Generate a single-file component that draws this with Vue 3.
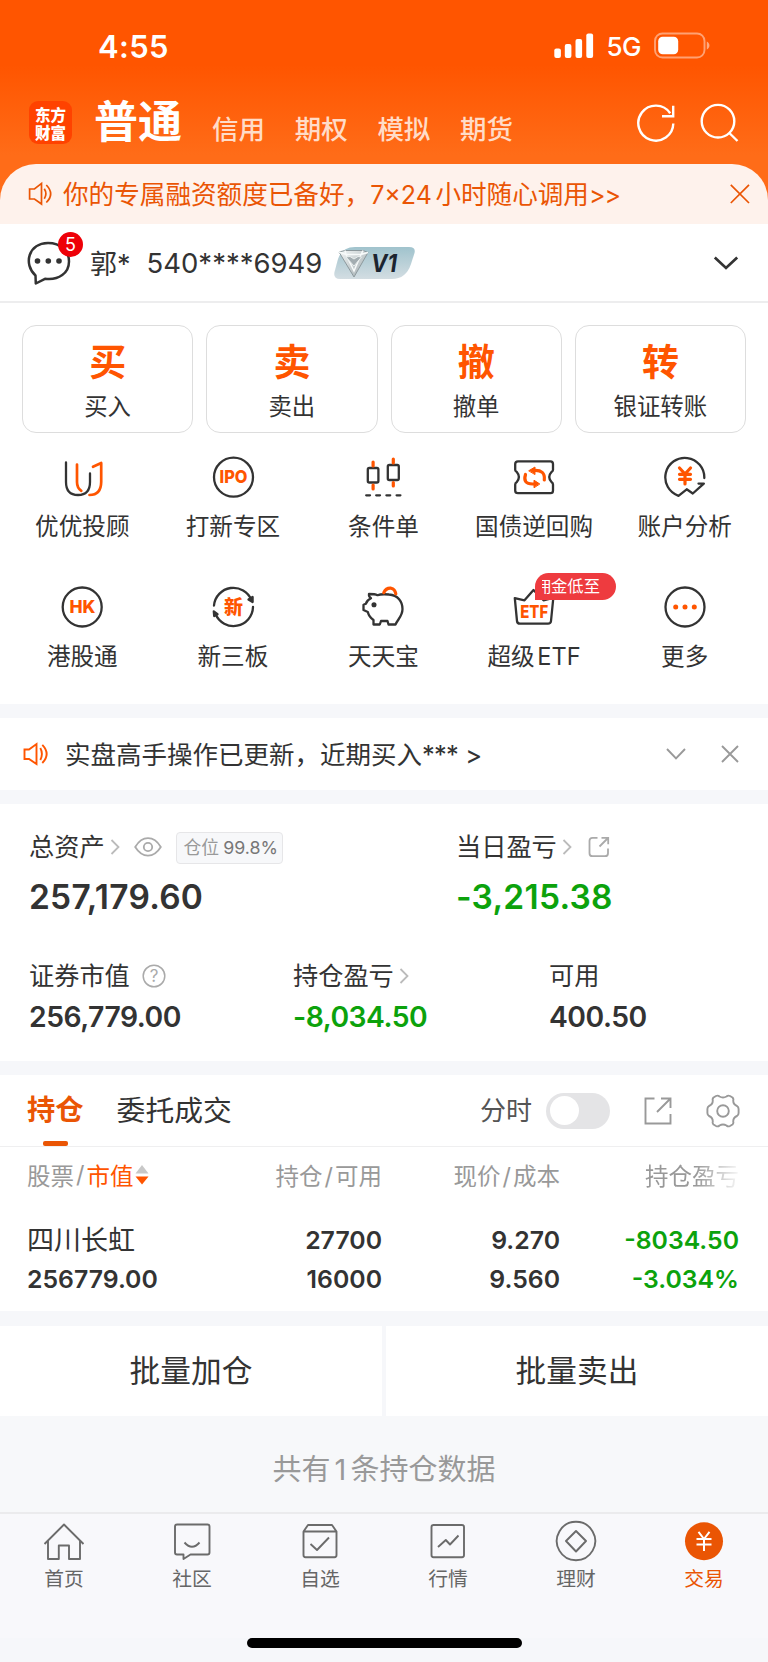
<template>
  <div class="page">
    <header class="header">
      <div class="status">
        <span class="time">4:55</span>
        <div class="status-right">
          <svg class="signal" width="40" height="26" viewBox="0 0 40 26" fill="#fff">
            <rect x="0.3" y="15.5" width="6.6" height="9.5" rx="2" />
            <rect x="10.8" y="11" width="6.6" height="14" rx="2" />
            <rect x="21.5" y="6" width="6.6" height="19" rx="2" />
            <rect x="32.3" y="0.5" width="6.8" height="24.5" rx="2" />
          </svg>
          <span class="net">5G</span>
          <svg class="battery" width="57" height="28" viewBox="0 0 57 28">
            <rect x="1" y="1.5" width="49.5" height="24" rx="7.5" fill="none" stroke="#fff" stroke-opacity=".45" stroke-width="1.9" />
            <rect x="4.2" y="4.7" width="20" height="17.6" rx="4.5" fill="#fff" />
            <path d="M52.8 9.5c3.5 1.5 3.5 6.5 0 8z" fill="#fff" fill-opacity=".5" />
          </svg>
        </div>
      </div>
      <div class="top-nav">
        <div class="logo"><span>东方</span><span>财富</span></div>
        <b class="main-tab">普通</b>
        <span class="sub-tab" v-for="tab in topTabs" :key="tab">{{ tab }}</span>
        <svg class="refresh" width="40" height="40" viewBox="0 0 40 40" fill="none" stroke="#fff" stroke-width="2.4">
          <path d="M37.3 20.5A17.5 17.5 0 1 1 34.2 10.2" />
          <path d="M37.2 2.8V13.2H26" />
        </svg>
        <svg class="search" width="40" height="40" viewBox="0 0 40 40" fill="none" stroke="#fff" stroke-width="2.4">
          <circle cx="18" cy="18.2" r="16.3" />
          <path d="M29.3 30L37.5 38" />
        </svg>
      </div>
    </header>

    <div class="banner">
      <svg width="26" height="26" viewBox="0 0 26 26" fill="none" stroke="#ea5504" stroke-width="1.7">
        <path d="M1.6 8H6.5L13.5 2.4V23L6.5 18H1.6Z" />
        <path d="M16.3 7.8Q19.5 12.8 16.3 17.8M18.3 4Q27 13 18.3 21.5" />
      </svg>
      <span class="banner-text">你的专属融资额度已备好，<i>7×24 </i>小时随心调用<em>&gt;&gt;</em></span>
      <svg class="banner-close" width="22" height="22" viewBox="0 0 22 22" fill="none" stroke="#ea5504" stroke-width="1.7">
        <path d="M1.8 1.8L20 20M20 1.8L1.8 20" />
      </svg>
    </div>

    <div class="user">
      <div class="chat">
        <svg width="46" height="46" viewBox="0 0 46 46">
          <path d="M9.5 35.5C-3 24 2.5 3.2 22 3C35 3 43 11.5 43 21.5C43 33 33 40.5 19 38.8L9.8 43.5Z" fill="none" stroke="#333" stroke-width="2.5" stroke-linejoin="round" />
          <g fill="#333">
            <circle cx="11.5" cy="21" r="2.8" />
            <circle cx="22.3" cy="21" r="2.8" />
            <circle cx="33" cy="21" r="2.8" />
          </g>
        </svg>
        <span class="count">5</span>
      </div>
      <span class="user-name">郭*</span>
      <span class="user-no">540****6949</span>
      <div class="level">
        <svg width="82" height="34" viewBox="0 0 82 34">
          <defs>
            <linearGradient id="lv" x1="0" y1="0" x2="0" y2="1">
              <stop offset="0" stop-color="#a0c3cd" />
              <stop offset="1" stop-color="#d3dde2" />
            </linearGradient>
            <linearGradient id="gem" x1="0" y1="0" x2="1" y2="1">
              <stop offset="0" stop-color="#f4f7f7" />
              <stop offset="1" stop-color="#9da8ac" />
            </linearGradient>
          </defs>
          <path d="M21 1H75Q82 1 80.5 7L77 18Q72 33 58 33H6Q-1 33 .5 26L4 13Q8 1 21 1Z" fill="url(#lv)" />
          <path d="M5 6L11 4.5H29L34 6.5L20 31Z" fill="url(#gem)" stroke="#8d999d" stroke-width="1" />
          <path d="M5 6L12 8.5H27L34 6.5M12 8.5L20 25L27 8.5M12 8.5L11 4.5M27 8.5L29 4.5" fill="none" stroke="#f7fafa" stroke-width="1.5" />
          <path d="M12 11L16 10.5L20 13L24 10.5L27.5 11L20 20Z" fill="#a3adb1" stroke="#e9eeee" stroke-width="1" />
          <text x="37" y="25.5" textLength="26" lengthAdjust="spacingAndGlyphs" class="level-text">V1</text>
        </svg>
      </div>
      <svg class="user-arrow" width="28" height="18" viewBox="0 0 28 18" fill="none" stroke="#333" stroke-width="2.7">
        <path d="M2.8 3.5L14 14L25.2 3.5" />
      </svg>
    </div>

    <section class="trade">
      <div class="cards">
        <div class="card" v-for="item in actions" :key="item.name">
          <b>{{ item.short }}</b>
          <span>{{ item.name }}</span>
        </div>
      </div>
      <div class="tools">
        <div class="tool" v-for="tool in tools" :key="tool.icon">
          <svg class="tool-icon" width="44" height="44" viewBox="0 0 44 44">
            <template v-if="tool.icon === 'uu'">
              <path d="M6 7.5V27C6 35 10 40 18 40S30 35 30 27V18.5" />
              <path class="o thin" d="M17 9.5V27Q17 33 21.3 35.8M33 11.8L41.2 8V27Q41 40 29.5 40" />
            </template>
            <template v-if="tool.icon === 'ipo'">
              <circle cx="22.5" cy="22.2" r="19.5" />
              <text x="22.5" y="28.4" textLength="28" lengthAdjust="spacingAndGlyphs">IPO</text>
            </template>
            <template v-if="tool.icon === 'cond'">
              <rect x="6.8" y="13" width="10.6" height="14.5" rx="1.5" />
              <rect x="26.8" y="10" width="11" height="15" rx="1.5" />
              <path class="o" d="M12.1 7V11M12.1 30V34M32.3 4V8M32.3 27.5V31" />
              <path d="M5.2 40.3H9M15.2 40.3H19M25.4 40.3H29.2M35.6 40.3H39.4" />
            </template>
            <template v-if="tool.icon === 'bond'">
              <path d="M6 6.3H38.5Q41 6.3 41 9V15Q41 16 39.5 17Q35 22 39.5 27Q41 28 41 29.500V35.500Q41 38.200 38.500 38.200H6Q3.200 38.200 3.200 35.500V29.500Q3.200 28 4.800 27Q9 22 4.800 17Q3.200 16 3.200 15V9Q3.200 6.300 6 6.300Z" />
              <path class="o" d="M13.5 19.5Q10.5 29 20.5 29H23M21.5 15.5Q33.5 14.5 32.3 25" />
              <path class="o solid" d="M17 15.6L23 12V19.2ZM27.5 28.8L22 25.2V32.4Z" />
            </template>
            <template v-if="tool.icon === 'account'">
              <path d="M41.3 23A19.5 19.5 0 1 0 15.5 40.8L23.7 34.3L29.8 38.5L40.8 28.6H35.5" />
              <path class="o yen" d="M16.5 13L22 19L27.5 13M22 19V29M16.5 19.3H27.5M16.5 24.3H27.5" />
            </template>
            <template v-if="tool.icon === 'hk'">
              <circle cx="22.2" cy="22" r="19.5" />
              <text x="22.5" y="28.2" textLength="26" lengthAdjust="spacingAndGlyphs">HK</text>
            </template>
            <template v-if="tool.icon === 'new'">
              <path d="M3 20.5A19.5 19.5 0 0 1 40.5 15M42 22A19.5 19.5 0 0 1 4.5 29" />
              <path class="dark" d="M37.5 14.5L41.6 12V17ZM2.8 26.5L6.5 29.2L3.2 31Z" />
              <text x="22.5" y="28.8" class="cn">新</text>
            </template>
            <template v-if="tool.icon === 'pig'">
              <path d="M8 9Q14 9 16.5 10.2Q20 8.8 28 9.5C37 10 41.5 17 41.5 24C41.5 31 37 34 34.5 39.5H27.5L26.500 36H20L18.800 39.500H12.500V35Q8 32 6.800 27L2.500 25V19.800L4.800 18.800Q6 15 10 13.200Q7.500 11.500 8 9Z" />
              <circle class="dark" cx="13" cy="19.8" r="1.4" />
              <path class="o" d="M22.8 7.7Q25 2.8 30 3.2Q34 4 34.8 8.8" />
            </template>
            <template v-if="tool.icon === 'etf'">
              <path d="M2.8 13.2L12.5 15.3L21.5 5L31.5 15.3L41.3 13L39 36Q38.7 38.7 36 38.7H8Q5.3 38.7 5 36Z" />
              <text x="22.2" y="32.8" textLength="28" lengthAdjust="spacingAndGlyphs">ETF</text>
            </template>
            <template v-if="tool.icon === 'more'">
              <circle cx="22" cy="22" r="19.5" />
              <path class="dots" d="M12.7 22H12.71M22 22H22.01M31.3 22H31.31" />
            </template>
          </svg>
          <span class="tool-name">{{ tool.name }}</span>
          <span class="promo" v-if="tool.promo"><span class="promo-clip"><i>{{ tool.promo }}</i></span></span>
        </div>
      </div>
    </section>

    <section class="notice">
      <svg width="27" height="24" viewBox="0 0 27 24" fill="none" stroke="#ff5500" stroke-width="1.9">
        <path d="M1.5 7.5H6L13.5 2V22L6 17H1.5Z" />
        <path d="M17.3 6Q20.5 12 17.3 18M19.3 2.8Q28 12 19.3 21" />
      </svg>
      <span class="notice-text">实盘高手操作已更新，近期买入<i>***</i> <em>&gt;</em></span>
      <svg class="fold" width="22" height="14" viewBox="0 0 22 14" fill="none" stroke="#999" stroke-width="1.9">
        <path d="M2 2L11 11.3L20 2" />
      </svg>
      <svg class="close" width="20" height="20" viewBox="0 0 20 20" fill="none" stroke="#999" stroke-width="1.9">
        <path d="M2 2L18 18M18 2L2 18" />
      </svg>
    </section>

    <section class="asset">
      <div class="asset-row">
        <div class="asset-main">
          <div class="label">
            <span>总资产</span>
            <svg class="more-arrow" width="10" height="16" viewBox="0 0 10 16"><path d="M1.5 1L8.5 8L1.5 15" /></svg>
            <svg class="eye" width="28" height="20" viewBox="0 0 28 20" fill="none" stroke="#aaa" stroke-width="1.8">
              <path d="M1.2 10Q6.5 1.2 14 1.2T26.8 10Q21.5 18.6 14 18.6T1.2 10Z" />
              <circle cx="14" cy="10" r="4.2" />
            </svg>
            <span class="tag">仓位 <i>99.8%</i></span>
          </div>
          <strong>257,179.60</strong>
        </div>
        <div class="asset-main">
          <div class="label">
            <span>当日盈亏</span>
            <svg class="more-arrow" width="10" height="16" viewBox="0 0 10 16"><path d="M1.5 1L8.5 8L1.5 15" /></svg>
            <svg class="share" width="22" height="22" viewBox="0 0 22 22" fill="none" stroke="#aaa" stroke-width="1.8">
              <path d="M9.5 1.8H4.5Q1.5 1.8 1.5 4.8V17.2Q1.5 20.2 4.5 20.2H17Q20 20.2 20 17.2V12.5M13.5 1.8H20.2V8.3M20 2L11.5 10.5" />
            </svg>
          </div>
          <strong class="green">-3,215.38</strong>
        </div>
      </div>
      <div class="asset-row second">
        <div class="asset-item">
          <div class="label">
            <span>证券市值</span>
            <svg class="ask" width="24" height="24" viewBox="0 0 24 24">
              <circle cx="12" cy="12" r="10.8" />
              <text x="12" y="18">?</text>
            </svg>
          </div>
          <strong>256,779.00</strong>
        </div>
        <div class="asset-item">
          <div class="label">
            <span>持仓盈亏</span>
            <svg class="more-arrow" width="10" height="16" viewBox="0 0 10 16"><path d="M1.5 1L8.5 8L1.5 15" /></svg>
          </div>
          <strong class="green">-8,034.50</strong>
        </div>
        <div class="asset-item">
          <div class="label"><span>可用</span></div>
          <strong>400.50</strong>
        </div>
      </div>
    </section>

    <section class="hold">
      <div class="hold-tabs">
        <b class="active">持仓</b>
        <span class="order">委托成交</span>
        <span class="minute">分时</span>
        <span class="switch"></span>
        <svg class="hold-share" width="28" height="28" viewBox="0 0 28 28" fill="none" stroke="#999" stroke-width="1.9">
          <path d="M10.5 1.5H1.5V26.5H26.5V17M17 1.5H26.5V11M26 2L13 15" />
        </svg>
        <svg class="gear" width="34" height="34" viewBox="0 0 34 34" fill="none" stroke="#999" stroke-width="1.9" stroke-linejoin="round">
          <path d="M10 2Q12 1 13.500 2.500Q17 4.500 20.500 2.500Q22 1 24 2L26.500 3.500Q27.800 4.800 27.200 6.500Q27.200 10.500 31 12Q32.600 13 32.600 15V19Q32.600 21 31 22Q27.200 23.500 27.200 27.500Q27.800 29.200 26.500 30.500L24 32Q22 33 20.500 31.500Q17 29.500 13.500 31.500Q12 33 10 32L7.500 30.500Q6.200 29.200 6.800 27.500Q6.800 23.500 3 22Q1.400 21 1.400 19V15Q1.400 13 3 12Q6.800 10.500 6.800 6.500Q6.200 4.800 7.500 3.500Z" />
          <circle cx="17" cy="17" r="5.8" />
        </svg>
      </div>
      <div class="grid head">
        <span>股票<em>/</em><i>市值</i><svg width="14" height="20" viewBox="0 0 14 20"><path d="M7 0L13.5 8.5H.5Z" fill="#c8c8c8" /><path d="M7 19.5L13.5 11.5H.5Z" fill="#ff5500" /></svg></span>
        <span>持仓<em>/</em>可用</span>
        <span>现价<em>/</em>成本</span>
        <span class="fade">持仓盈亏</span>
      </div>
      <div class="grid row" v-for="stock in stocks" :key="stock.name">
        <div><span class="stock-name">{{ stock.name }}</span><span>{{ stock.value }}</span></div>
        <div><span>{{ stock.amount }}</span><span>{{ stock.usable }}</span></div>
        <div><span>{{ stock.price }}</span><span>{{ stock.cost }}</span></div>
        <div class="green"><span>{{ stock.profit }}</span><span>{{ stock.rate }}</span></div>
      </div>
    </section>

    <div class="batch">
      <button>批量加仓</button>
      <button>批量卖出</button>
    </div>

    <p class="total">共有<i>1</i>条持仓数据</p>

    <footer class="tabbar">
      <div class="tab" v-for="(tab, index) in tabs" :key="tab" :class="{ active: index === current }" @click="current = index">
        <svg width="44" height="44" viewBox="0 0 44 44">
          <path v-if="index === 0" d="M2.5 25L22 5.5L41.5 25M6 22V40H16.8V26.5H27V40H38V22" />
          <path v-if="index === 1" d="M7 5.5H37.5Q39.5 5.5 39.5 7.5V33.5Q39.5 35.5 37.5 35.5H20.5L13.5 40V35.5H7Q5 35.5 5 33.5V7.5Q5 5.5 7 5.5ZM14.5 23.5Q22 32 29.5 23.5" />
          <path v-if="index === 2" d="M5.5 12.5V36Q5.5 38.2 7.5 38.2H36.5Q38.5 38.2 38.5 36V12.5L34 6H10L5.5 12.5H38.5M12.5 25L19 31L31 18.5" />
          <path v-if="index === 3" d="M7.5 6H36Q38 6 38 8V36Q38 38.2 36 38.2H7.5Q5.5 38.2 5.5 36V8Q5.5 6 7.5 6ZM12 28L19.8 21L24 25.5L32.5 16.5" />
          <path v-if="index === 4" d="M22 2.8A19.2 19.2 0 1 1 21.99 2.8ZM22 12L32 22L22 32.5L12 22Z" />
          <template v-if="index === 5">
            <circle cx="22" cy="22.3" r="19" />
            <path class="yen-line" d="M16.5 12.8L22 20L27.5 12.8M22 20V32M14.5 20H29.5M14.5 25.5H29.5" />
          </template>
        </svg>
        <span>{{ tab }}</span>
      </div>
    </footer>
    <div class="home"></div>
  </div>
</template>

<script setup>
import { ref } from "vue";

const topTabs = ["信用", "期权", "模拟", "期货"];

const actions = [
  { short: "买", name: "买入" },
  { short: "卖", name: "卖出" },
  { short: "撤", name: "撤单" },
  { short: "转", name: "银证转账" },
];

const tools = [
  { icon: "uu", name: "优优投顾" },
  { icon: "ipo", name: "打新专区" },
  { icon: "cond", name: "条件单" },
  { icon: "bond", name: "国债逆回购" },
  { icon: "account", name: "账户分析" },
  { icon: "hk", name: "港股通" },
  { icon: "new", name: "新三板" },
  { icon: "pig", name: "天天宝" },
  { icon: "etf", name: "超级 ETF", promo: "佣金低至" },
  { icon: "more", name: "更多" },
];

const stocks = [
  {
    name: "四川长虹",
    value: "256779.00",
    amount: "27700",
    usable: "16000",
    price: "9.270",
    cost: "9.560",
    profit: "-8034.50",
    rate: "-3.034%",
  },
];

const tabs = ["首页", "社区", "自选", "行情", "理财", "交易"];
const current = ref(5);
</script>

<style>
body {
  margin: 0;
  background: #f7f8fa;
}
</style>

<style scoped>
.page {
  width: 768px;
  height: 1662px;
  display: flex;
  flex-direction: column;
  overflow: hidden;
  box-sizing: border-box;
  background: #f6f7fa;
  color: #333;
  font-family: Inter, "Noto Sans CJK SC", sans-serif;
}

.page > * {
  flex-shrink: 0;
  box-sizing: border-box;
}

svg {
  display: block;
  flex-shrink: 0;
}

i,
em {
  font-style: normal;
}

/* 顶部 */
.header {
  height: 204px;
  margin-bottom: -40px;
  background: linear-gradient(#ff5500 0, #ff5500 65px, #ff6c18 155px, #ff6c18 100%);
  color: #fff;
}

.status {
  display: flex;
  justify-content: space-between;
  height: 92px;
  padding: 0 57px 0 98px;
  align-items: center;
}

.time {
  font-size: 31px;
  font-weight: 600;
  letter-spacing: 0.3px;
}

.status-right {
  display: flex;
  align-items: center;
}

.net {
  margin: 1px 13px 0 12px;
  font-size: 26px;
  font-weight: 500;
  letter-spacing: -0.5px;
}

.top-nav {
  display: flex;
  align-items: center;
  height: 61px;
  padding: 0 28px 0 29px;
}

.logo {
  width: 43px;
  height: 43px;
  border-radius: 9px;
  background: #ff4200;
  display: flex;
  flex-direction: column;
  align-items: center;
  justify-content: center;
  font: 900 15.5px/18px "Noto Sans CJK SC", sans-serif;
}

.main-tab {
  margin: -1px 7px 0 22px;
  font-size: 44px;
  line-height: 60px;
}

.sub-tab {
  width: 53px;
  margin: 12px 0 0 22px;
  padding-right: 7.7px;
  font-size: 26.5px;
  line-height: 34px;
  font-weight: 500;
  white-space: nowrap;
  color: #ffdcc8;
}

.main-tab + .sub-tab {
  margin-left: 23px;
}

.refresh {
  margin: 0 24px 0 auto;
}

/* 公告条 */
.banner {
  display: flex;
  align-items: center;
  height: 60px;
  padding: 0 17px 0 28px;
  border-radius: 36px 36px 0 0;
  background: #fef2ec;
  color: #ea5504;
}

.banner-text {
  margin: 2px 0 0 9px;
  font-size: 25.6px;
  line-height: 36px;
  white-space: nowrap;
}

.banner-text i {
  font-size: 25px;
  word-spacing: -3.5px;
}

.banner-text em {
  font-size: 25px;
  letter-spacing: -1px;
}

.banner-close {
  margin-left: auto;
}

/* 用户 */
.user {
  display: flex;
  align-items: center;
  height: 79px;
  padding: 0 28px 0 26px;
  border-bottom: 2px solid #ededee;
  background: #fff;
}

.chat {
  position: relative;
}

.count {
  position: absolute;
  right: -11px;
  top: -8px;
  width: 25px;
  height: 25px;
  border-radius: 50%;
  background: #ee0008;
  color: #fff;
  font-size: 18px;
  line-height: 25px;
  text-align: center;
}

.user-name {
  margin-left: 18px;
  font-size: 27px;
}

.user-no {
  margin: 1px 0 0 16px;
  font-size: 27.5px;
}

.level {
  margin: 1px 0 0 12px;
}

.level-text {
  font: italic 700 24px Inter, sans-serif;
  fill: #1b2430;
}

.user-arrow {
  margin-left: auto;
}

/* 交易 */
.trade {
  height: 401px;
  padding-top: 22px;
  background: #fff;
}

.cards {
  display: grid;
  grid-template-columns: repeat(4, 1fr);
  gap: 13px;
  padding: 0 22px;
}

.card {
  display: flex;
  flex-direction: column;
  align-items: center;
  height: 108px;
  box-sizing: border-box;
  padding-top: 13px;
  border: 1.5px solid #ddd;
  border-radius: 14px;
}

.card b {
  font-size: 37px;
  line-height: 48px;
  color: #ff5500;
}

.card span {
  margin-top: 4px;
  font-size: 23.4px;
  line-height: 32px;
}

.tools {
  display: grid;
  grid-template-columns: repeat(5, 150.6px);
  grid-auto-rows: 129.5px;
  padding: 22px 0 0 7px;
}

.tool {
  position: relative;
  display: flex;
  flex-direction: column;
  align-items: center;
}

.tool-icon {
  fill: none;
  stroke: #333;
  stroke-width: 2.3;
  stroke-linecap: round;
  stroke-linejoin: round;
}

.tool-icon .o {
  stroke: #ff5500;
  stroke-width: 3.2;
}

.tool-icon .thin {
  stroke-width: 2.7;
}

.tool-icon .solid {
  fill: #ff5500;
  stroke-width: 1;
}

.tool-icon .dark {
  fill: #333;
}

.tool-icon .dots {
  stroke: #ff5500;
  stroke-width: 5;
}

.tool-icon text {
  fill: #ff5500;
  stroke: none;
  font-size: 17.5px;
  font-weight: 800;
  text-anchor: middle;
}

.tool-icon .cn {
  font-size: 19px;
}

.tool-name {
  margin-top: 13px;
  font-size: 23.6px;
  line-height: 30px;
  word-spacing: -4px;
  white-space: nowrap;
}

.promo {
  position: absolute;
  left: 76px;
  top: -12px;
  width: 81px;
  height: 27px;
  box-sizing: border-box;
  padding-left: 7px;
  border-radius: 14px 14px 14px 0;
  background: #ee3b3f;
  color: #fff;
  font-size: 16.3px;
  line-height: 26px;
}

.promo-clip {
  display: block;
  width: 60px;
  overflow: hidden;
}

.promo-clip i {
  margin-left: -7px;
  white-space: nowrap;
}

/* 提示 */
.notice {
  display: flex;
  align-items: center;
  height: 72px;
  margin: 14px 0;
  padding: 0 28px 0 23px;
  background: #fff;
}

.notice-text {
  margin: -4px 0 0 15px;
  font-size: 25.5px;
  white-space: nowrap;
}

.notice-text i {
  letter-spacing: -0.8px;
}

.fold {
  margin-left: auto;
}

.close {
  margin-left: 33px;
}

/* 资产 */
.asset {
  height: 257px;
  padding: 25px 29px 0;
  background: #fff;
}

.asset-row {
  display: grid;
  grid-template-columns: 427px 1fr;
}

.asset-row.second {
  grid-template-columns: 264px 256px 1fr;
  margin-top: 39px;
}

.label {
  display: flex;
  align-items: center;
  height: 36px;
  font-size: 25.2px;
  line-height: 36px;
}

.more-arrow {
  margin-left: 5px;
  fill: none;
  stroke: #bbb;
  stroke-width: 1.8;
}

.eye {
  margin-left: 14px;
}

.tag {
  height: 32px;
  box-sizing: border-box;
  margin: 1px 0 0 14px;
  padding: 0 4px 0 7px;
  border: 1.5px solid #e6e6e8;
  border-radius: 4px;
  background: #f7f8fa;
  color: #999;
  font-size: 17.8px;
  line-height: 29px;
  word-spacing: -1px;
  white-space: nowrap;
}

.tag i {
  color: #777;
}

.share {
  margin-left: 16px;
}

.asset-main strong {
  display: block;
  margin-top: 10px;
  font-size: 33.5px;
  line-height: 44px;
  font-weight: 600;
  letter-spacing: 0.25px;
}

.ask {
  margin-left: 12px;
  fill: none;
  stroke: #aaa;
  stroke-width: 1.5;
}

.ask text {
  fill: #aaa;
  stroke: none;
  font-size: 17px;
  text-anchor: middle;
}

.asset-item strong {
  display: block;
  margin-top: 5px;
  font-size: 28.3px;
  line-height: 36px;
  font-weight: 600;
  letter-spacing: -0.5px;
}

strong.green,
.green {
  color: #0ca20c;
}

/* 持仓 */
.hold {
  height: 236px;
  margin-top: 14px;
  background: #fff;
}

.hold-tabs {
  display: flex;
  align-items: center;
  height: 72px;
  box-sizing: border-box;
  padding: 0 28px 0 27px;
  border-bottom: 1.5px solid #efeff0;
}

.hold-tabs .active {
  position: relative;
  height: 70px;
  font-size: 28.3px;
  line-height: 68px;
  color: #ea5504;
}

.hold-tabs .active::after {
  content: "";
  position: absolute;
  left: 16px;
  bottom: 0;
  width: 25px;
  height: 5px;
  border-radius: 2px;
  background: #ea5504;
}

.order {
  margin: -4px 0 0 33px;
  font-size: 28.8px;
}

.minute {
  margin: -4px 0 0 auto;
  font-size: 26px;
  color: #555;
}

.switch {
  width: 64px;
  height: 36px;
  margin: 0 34px 0 14px;
  border-radius: 18px;
  background: #e4e4e6;
}

.switch::before {
  content: "";
  display: block;
  width: 29px;
  height: 29px;
  margin: 3.5px;
  border-radius: 50%;
  background: #fff;
}

.hold-share {
  margin-right: 34px;
}

.grid {
  display: grid;
  grid-template-columns: 176px 179px 178px 1fr;
  padding: 0 29px 0 27px;
  text-align: right;
}

.grid > :first-child {
  text-align: left;
}

.head {
  height: 55px;
  align-items: center;
  font-size: 23.5px;
  color: #999;
  white-space: nowrap;
}

.head > :first-child {
  display: flex;
  align-items: center;
}

.head em {
  margin: 0 2px;
}

.head i {
  color: #ff5500;
}

.head svg {
  margin-left: 2px;
}

.head .fade {
  -webkit-mask: linear-gradient(90deg, #000 76%, transparent 102%);
  mask: linear-gradient(90deg, #000 76%, transparent 102%);
}

.row {
  padding-top: 19px;
  font-size: 24.8px;
  font-weight: 600;
}

.row span {
  display: block;
  height: 39px;
  line-height: 39px;
}

.row .stock-name {
  font-size: 27px;
  font-weight: 400;
}

.batch {
  display: grid;
  grid-template-columns: 1fr 1fr;
  gap: 4px;
  height: 90px;
  margin-top: 15px;
}

.batch button {
  padding: 0;
  border: 0;
  background: #fff;
  color: #333;
  font: 30.7px/90px Inter, "Noto Sans CJK SC", sans-serif;
}

.total {
  height: 96px;
  margin: 0;
  font-size: 29px;
  line-height: 108px;
  text-align: center;
  color: #999;
  background: #f7f8fa;
}

.total i {
  margin: 0 4px;
}

/* 底部 */
.tabbar {
  display: grid;
  grid-template-columns: repeat(6, 1fr);
  height: 126px;
  padding-top: 5px;
  border-top: 2px solid #ebebed;
  background: #f8f8fb;
}

.tab {
  display: flex;
  flex-direction: column;
  align-items: center;
  font-size: 19.8px;
  line-height: 26px;
  color: #666;
}

.tab svg {
  fill: none;
  stroke: #6b6b6b;
  stroke-width: 1.9;
  stroke-linejoin: round;
}

.tab span {
  margin-top: 3px;
}

.tab.active {
  color: #ea5504;
}

.tab.active circle {
  fill: #ea5504;
  stroke: none;
}

.tab .yen-line {
  stroke: #fff;
  stroke-width: 2;
}

.home {
  width: 275px;
  height: 10px;
  margin: 0 auto;
  border-radius: 5px;
  background: #000;
}
</style>
